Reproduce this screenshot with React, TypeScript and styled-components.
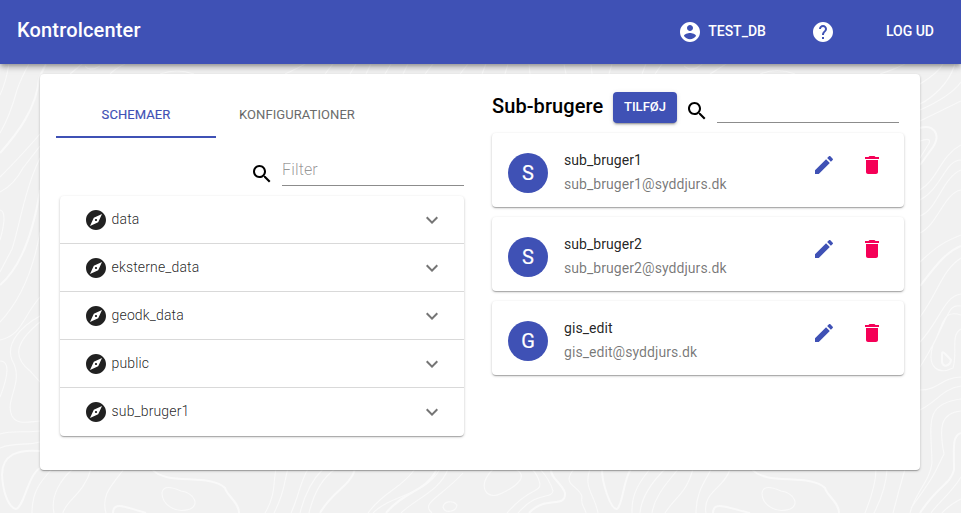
import React from 'react';
import styled, { createGlobalStyle } from 'styled-components';

const GlobalStyle = createGlobalStyle`
  *, *::before, *::after { box-sizing: border-box; }
  html, body { margin: 0; height: 100%; }
  body {
    background: #f1f1f1;
    font-family: Roboto, 'Liberation Sans', sans-serif;
    color: rgba(0, 0, 0, 0.87);
    overflow: hidden;
  }
`;

const elevation1 =
  '0 1px 3px 0 rgba(0,0,0,.2), 0 1px 1px 0 rgba(0,0,0,.14), 0 2px 1px -1px rgba(0,0,0,.12)';
const primary = '#3f51b5';

const Page = styled.div`
  position: relative;
  z-index: 0;
  height: 100vh;
  display: flex;
  flex-direction: column;
`;

const Backdrop = styled.svg`
  position: absolute;
  top: 0;
  left: 0;
  z-index: -1;
  fill: none;
  stroke: #f9f9f9;
  stroke-width: 1.1;
`;

const AppBar = styled.header`
  flex: none;
  display: flex;
  align-items: center;
  height: 64px;
  padding: 0 27px 0 17px;
  background: ${primary};
  color: #fff;
  box-shadow: 0 2px 4px -1px rgba(0,0,0,.25), 0 4px 5px 0 rgba(0,0,0,.14), 0 1px 10px 0 rgba(0,0,0,.14);
`;

const Brand = styled.h1`
  flex: 1;
  margin: 0 0 4px;
  font-size: 20px;
  font-weight: 500;
  line-height: 28px;
  letter-spacing: 0.17px;
`;

const NavItem = styled.a<{ $gap: number }>`
  display: flex;
  align-items: center;
  margin-left: ${(p) => p.$gap}px;
  font-size: 14px;
  font-weight: 500;
  line-height: 24px;
`;

const NavLabel = styled.span<{ $inset?: number }>`
  margin-left: ${(p) => p.$inset ?? 0}px;
  margin-bottom: 2px;
`;

const Icon = styled.svg<{ $color?: string }>`
  flex: none;
  display: block;
  width: 24px;
  height: 24px;
  fill: ${(p) => p.$color ?? 'currentColor'};
`;

const Sheet = styled.main`
  display: grid;
  grid-template-columns: 408px 412px;
  column-gap: 28px;
  width: 880px;
  height: 396px;
  margin: 10px 0 0 40px;
  padding: 16px;
  border-radius: 4px;
  background: #fff;
  box-shadow: ${elevation1};
`;

const Column = styled.section`
  display: flex;
  flex-direction: column;
`;

const Tabs = styled.div`
  display: flex;
  height: 48px;
`;

const Tab = styled.button<{ $active?: boolean }>`
  min-width: 160px;
  height: 48px;
  padding: 4px 23px 0;
  border: 0;
  border-bottom: 2px solid ${(p) => (p.$active ? primary : 'transparent')};
  background: none;
  color: ${(p) => (p.$active ? primary : 'rgba(0,0,0,.58)')};
  font: 400 13px/20px Roboto, sans-serif;
  letter-spacing: 0.08px;
  -webkit-text-stroke: 0.15px currentColor;
`;

const SearchRow = styled.label<{ $top: number }>`
  display: flex;
  justify-content: flex-end;
  height: 32px;
  margin-top: ${(p) => p.$top}px;
`;

const SearchIcon = styled(Icon)`
  margin: 8px 8px 0 0;
  fill: #000;
`;

const SearchInput = styled.input`
  width: 182px;
  height: 32px;
  padding: 0 0 1px;
  border: 0;
  border-bottom: 1px solid rgba(0, 0, 0, 0.45);
  background: none;
  font: 300 16px/20px Roboto, sans-serif;
  letter-spacing: 0.15px;
  outline: 0;
  &::placeholder { color: rgba(0, 0, 0, 0.42); opacity: 1; }
`;

const SchemaList = styled.ul`
  margin: 10px 0 0 4px;
  padding: 0;
  list-style: none;
  border-radius: 4px;
  background: #fff;
  box-shadow: ${elevation1};
`;

const SchemaRow = styled.li`
  display: flex;
  align-items: center;
  height: 48px;
  padding: 0 20px 0 24px;
  &:not(:last-child) { box-shadow: inset 0 -1px #d9d9d9; }
`;

const SchemaName = styled.span`
  flex: 1;
  padding: 0 0 2px 3.6px;
  font-size: 14px;
  font-weight: 300;
  line-height: 20px;
  letter-spacing: 0.14px;
`;

const Toolbar = styled.div`
  display: flex;
  height: 33px;
`;

const Heading = styled.h2`
  width: 121px;
  margin: 2px 0 0;
  color: #000;
  font-size: 20px;
  font-weight: 500;
  line-height: 28px;
  letter-spacing: 0.08px;
`;

const AddButton = styled.button`
  display: flex;
  justify-content: center;
  width: 64px;
  height: 31px;
  margin: 2px 8px 0 0;
  padding: 1px 0 0;
  border: 0;
  border-radius: 4px;
  background: ${primary};
  color: #fff;
  font: 500 13px/28px Roboto, sans-serif;
  box-shadow: 0 3px 1px -2px rgba(0,0,0,.2), 0 2px 2px 0 rgba(0,0,0,.14), 0 1px 5px 0 rgba(0,0,0,.12);
`;

const UserCard = styled.article`
  display: flex;
  height: 74px;
  margin-top: 10px;
  padding: 16px 20px 16px 16px;
  border-radius: 4px;
  background: #fff;
  box-shadow: ${elevation1};
`;

const Avatar = styled.div`
  width: 40px;
  height: 40px;
  margin: 4px 16px 0 0;
  border-radius: 50%;
  background: ${primary};
  color: #fff;
  font-size: 20px;
  line-height: 40px;
  text-align: center;
  -webkit-text-stroke: 0.2px currentColor;
`;

const UserText = styled.div`
  flex: 1;
  margin-top: -1px;
  font-size: 14px;
  line-height: 24px;
  letter-spacing: 0.06px;
`;

const Email = styled.div`
  color: rgba(0, 0, 0, 0.54);
`;

const Actions = styled.div`
  display: flex;
  gap: 24px;
  margin-top: 4px;
`;

const icons = {
  account:
    'M12 2C6.48 2 2 6.48 2 12s4.48 10 10 10 10-4.48 10-10S17.52 2 12 2zm0 3c1.66 0 3 1.34 3 3s-1.34 3-3 3-3-1.34-3-3 1.34-3 3-3zm0 14.2c-2.5 0-4.71-1.28-6-3.22.03-1.99 4-3.08 6-3.08 1.99 0 5.97 1.09 6 3.08-1.29 1.94-3.5 3.22-6 3.22z',
  help: 'M12 2C6.48 2 2 6.48 2 12s4.48 10 10 10 10-4.48 10-10S17.52 2 12 2zm1 17h-2v-2h2v2zm2.07-7.75l-.9.92C13.45 12.9 13 13.5 13 15h-2v-.5c0-1.1.45-2.1 1.17-2.83l1.24-1.26c.37-.36.59-.86.59-1.41 0-1.1-.9-2-2-2s-2 .9-2 2H8c0-2.21 1.79-4 4-4s4 1.79 4 4c0 .88-.36 1.68-.93 2.25z',
  search:
    'M15.5 14h-.79l-.28-.27C15.41 12.59 16 11.11 16 9.5 16 5.91 13.09 3 9.5 3S3 5.91 3 9.5 5.91 16 9.5 16c1.61 0 3.09-.59 4.23-1.57l.27.28v.79l5 4.99L20.49 19l-4.99-5zm-6 0C7.01 14 5 11.99 5 9.5S7.01 5 9.5 5 14 7.01 14 9.5 11.99 14 9.5 14z',
  explore:
    'M12 10.9c-.61 0-1.1.49-1.1 1.1s.49 1.1 1.1 1.1c.61 0 1.1-.49 1.1-1.1s-.49-1.1-1.1-1.1zM12 2C6.48 2 2 6.48 2 12s4.48 10 10 10 10-4.48 10-10S17.52 2 12 2zm2.19 12.19L6 18l3.81-8.19L18 6l-3.81 8.19z',
  expand: 'M16.59 8.59L12 13.17 7.41 8.59 6 10l6 6 6-6z',
  edit: 'M3 17.25V21h3.75L17.81 9.94l-3.75-3.75L3 17.25zM20.71 7.04c.39-.39.39-1.02 0-1.41l-2.34-2.34c-.39-.39-1.02-.39-1.41 0l-1.83 1.83 3.75 3.75 1.83-1.83z',
  trash: 'M6 19c0 1.1.9 2 2 2h8c1.1 0 2-.9 2-2V7H6v12zM19 4h-3.5l-1-1h-5l-1 1H5v2h14V4z',
};

const contours = [
  // left margin
  'M0 95Q6 82 9 64', 'M0 133Q10 116 17 90Q21 78 29 64', 'M0 177Q22 155 40 134', 'M0 192Q14 185 23 168L40 146',
  'M0 210Q8 212 0 240', 'M0 272L12 249C19 228 25 188 40 158', 'M0 322Q30 290 40 232', 'M0 340C22 335 22 318 40 297',
  'M40 316C18 328 6 345 12 360C25 382 4 400 12 416C17 425 27 422 40 421', 'M40 322C13 344 14 358 30 371L40 382',
  'M0 361Q14 361 0 397', 'M0 434C12 430 26 433 40 431', 'M0 448C14 442 26 446 40 442',
  // bottom strip
  'M32 513C32 492 40 482 52 469', 'M54 513C50 495 62 478 73 469', 'M63 513C66 500 84 494 91 469', 'M106 513C101 495 111 486 124 469',
  'M162 493C163 485 172 487 181 491C194 493 200 505 190 509C176 514 162 505 162 493Z',
  'M265 513C276 495 273 482 276 469', 'M274 513C286 490 284 480 288 469', 'M291 513C299 496 300 482 308 469',
  'M300 513C305 493 312 480 323 469', 'M309 513C313 496 320 480 335 469', 'M368 513C385 490 400 490 415 469', 'M373 513C390 495 425 496 440 469', 'M401 513C415 499 440 491 448 469',
  'M432 513C420 503 440 498 463 473', 'M443 507C444 501 453 500 457 505C456 512 445 514 443 507Z',
  'M493 469C476 487 487 500 500 494C520 485 528 475 515 469',
  'M507 513C529 487 540 493 540 484Q538 475 532 469', 'M518 513C538 490 551 500 553 491Q550 480 540 469',
  'M574 469C560 486 580 485 582 497C580 504 585 508 586 513', 'M590 469C583 488 595 495 598 513',
  'M632 513C631 493 641 480 650 469', 'M640 513C641 500 649 485 665 469', 'M652 513C655 494 670 480 678 469',
  'M665 513C676 496 686 494 693 469', 'M696 513C696 490 707 479 711 469', 'M706 513C702 492 725 488 730 469',
  'M762 493C763 485 772 487 781 491C794 493 800 505 790 509C776 514 762 505 762 493Z',
  'M865 513Q876 486 876 469', 'M874 513Q886 490 887 469', 'M893 513Q899 490 905 469',
  // right margin
  'M920 84Q938 73 943 64', 'M920 104C932 98 949 84 955 64', 'M920 110Q951 96 961 82', 'M920 121L961 101',
  'M920 141C928 138 932 139 928 145L920 158', 'M920 190C939 178 940 156 961 145', 'M920 200C942 188 945 160 961 160', 'M920 216C938 209 942 178 961 170',
  'M920 233C938 224 944 193 961 190', 'M920 262C937 246 944 242 961 235', 'M920 317C938 293 942 270 961 258', 'M920 342C940 321 944 296 961 294',
  'M920 367C950 320 946 303 961 306', 'M961 315C942 309 944 324 933 345C926 368 939 375 953 368C958 352 950 335 961 329',
  'M920 390C939 390 940 378 961 377', 'M920 410C937 402 942 389 961 386', 'M910 513C915 493 930 481 932 463C931 422 924 404 961 399',
  'M911 508C940 468 936 469 944 454C939 428 940 413 961 411', 'M931 513C940 500 950 495 961 477', 'M942 513Q949 505 961 499',
  // strip under the app bar
  'M70 74L82 64', 'M85 66Q90 72 100 66', 'M110 74Q116 68 125 64', 'M160 74Q177 68 194 74', 'M285 74Q298 68 305 64',
  'M325 74L333 64', 'M350 74L356 64', 'M366 74L371 64', 'M385 74L391 64', 'M403 74L408 64', 'M425 74L433 64',
  'M460 74L468 64', 'M482 74L486 64', 'M505 74L508 64', 'M530 74L529 64', 'M566 74L564 64', 'M592 74L591 64', 'M609 74L612 64',
  'M642 74L646 64', 'M655 74L662 64', 'M684 66Q692 73 702 64', 'M710 74L726 64', 'M760 74Q777 67 795 74', 'M880 74Q895 69 905 64',
];
const boldContours = [
  'M0 153C17 134 37 108 39 78L46 64', 'M0 285Q29 260 40 190',
  'M40 451C17 449 2 455 2 475C3 492 8 507 16 509C24 507 28 475 40 468',
  'M152 469C165 486 210 473 225 488C227 496 239 502 239 513', 'M113 513C113 500 128 508 146 513',
  'M320 513C333 490 350 487 355 469', 'M386 513C405 490 426 492 437 469',
  'M529 513C545 495 566 509 565 493C562 483 550 478 551 469', 'M602 469C602 484 611 510 617 509C623 505 623 480 631 469',
  'M752 469C765 486 810 473 825 488C827 496 839 502 839 513', 'M713 513C713 500 728 508 750 513',
  'M920 128C932 124 942 133 933 147L920 165', 'M920 286C937 264 946 252 961 246', 'M920 513C938 485 950 485 954 470C954 447 952 436 961 433',
  'M942 354C942 349 947 356 951 360C950 366 943 368 942 362Z',
];

const schemas = ['data', 'eksterne_data', 'geodk_data', 'public', 'sub_bruger1'];
const users = [
  { name: 'sub_bruger1', email: 'sub_bruger1@syddjurs.dk' },
  { name: 'sub_bruger2', email: 'sub_bruger2@syddjurs.dk' },
  { name: 'gis_edit', email: 'gis_edit@syddjurs.dk' },
];

function Glyph({ name, color }: { name: keyof typeof icons; color?: string }) {
  return (
    <Icon viewBox="0 0 24 24" $color={color} aria-hidden>
      <path d={icons[name]} />
    </Icon>
  );
}

function Search({ top, placeholder }: { top: number; placeholder?: string }) {
  return (
    <SearchRow $top={top}>
      <SearchIcon viewBox="0 0 24 24" aria-hidden>
        <path d={icons.search} />
      </SearchIcon>
      <SearchInput placeholder={placeholder} />
    </SearchRow>
  );
}

export default function App() {
  return (
    <>
      <GlobalStyle />
      <Page>
        <Backdrop width="961" height="513" viewBox="0 0 961 513" aria-hidden>
          <path d={contours.join('')} />
          <path d={boldContours.join('')} strokeWidth="2" />
        </Backdrop>
        <AppBar>
          <Brand>Kontrolcenter</Brand>
          <NavItem $gap={0}>
            <Glyph name="account" />
            <NavLabel $inset={6}>TEST_DB</NavLabel>
          </NavItem>
          <NavItem $gap={45}>
            <Glyph name="help" />
          </NavItem>
          <NavItem $gap={51}>
            <NavLabel>LOG UD</NavLabel>
          </NavItem>
        </AppBar>
        <Sheet>
          <Column>
            <Tabs>
              <Tab $active>SCHEMAER</Tab>
              <Tab>KONFIGURATIONER</Tab>
            </Tabs>
            <Search top={16} placeholder="Filter" />
            <SchemaList>
              {schemas.map((name) => (
                <SchemaRow key={name}>
                  <Glyph name="explore" color="#212121" />
                  <SchemaName>{name}</SchemaName>
                  <Glyph name="expand" color="#757575" />
                </SchemaRow>
              ))}
            </SchemaList>
          </Column>
          <Column>
            <Toolbar>
              <Heading>Sub-brugere</Heading>
              <AddButton>TILFØJ</AddButton>
              <Search top={1} />
            </Toolbar>
            {users.map((user) => (
              <UserCard key={user.name}>
                <Avatar>{user.name[0].toUpperCase()}</Avatar>
                <UserText>
                  <div>{user.name}</div>
                  <Email>{user.email}</Email>
                </UserText>
                <Actions>
                  <Glyph name="edit" color={primary} />
                  <Glyph name="trash" color="#f50057" />
                </Actions>
              </UserCard>
            ))}
          </Column>
        </Sheet>
      </Page>
    </>
  );
}
